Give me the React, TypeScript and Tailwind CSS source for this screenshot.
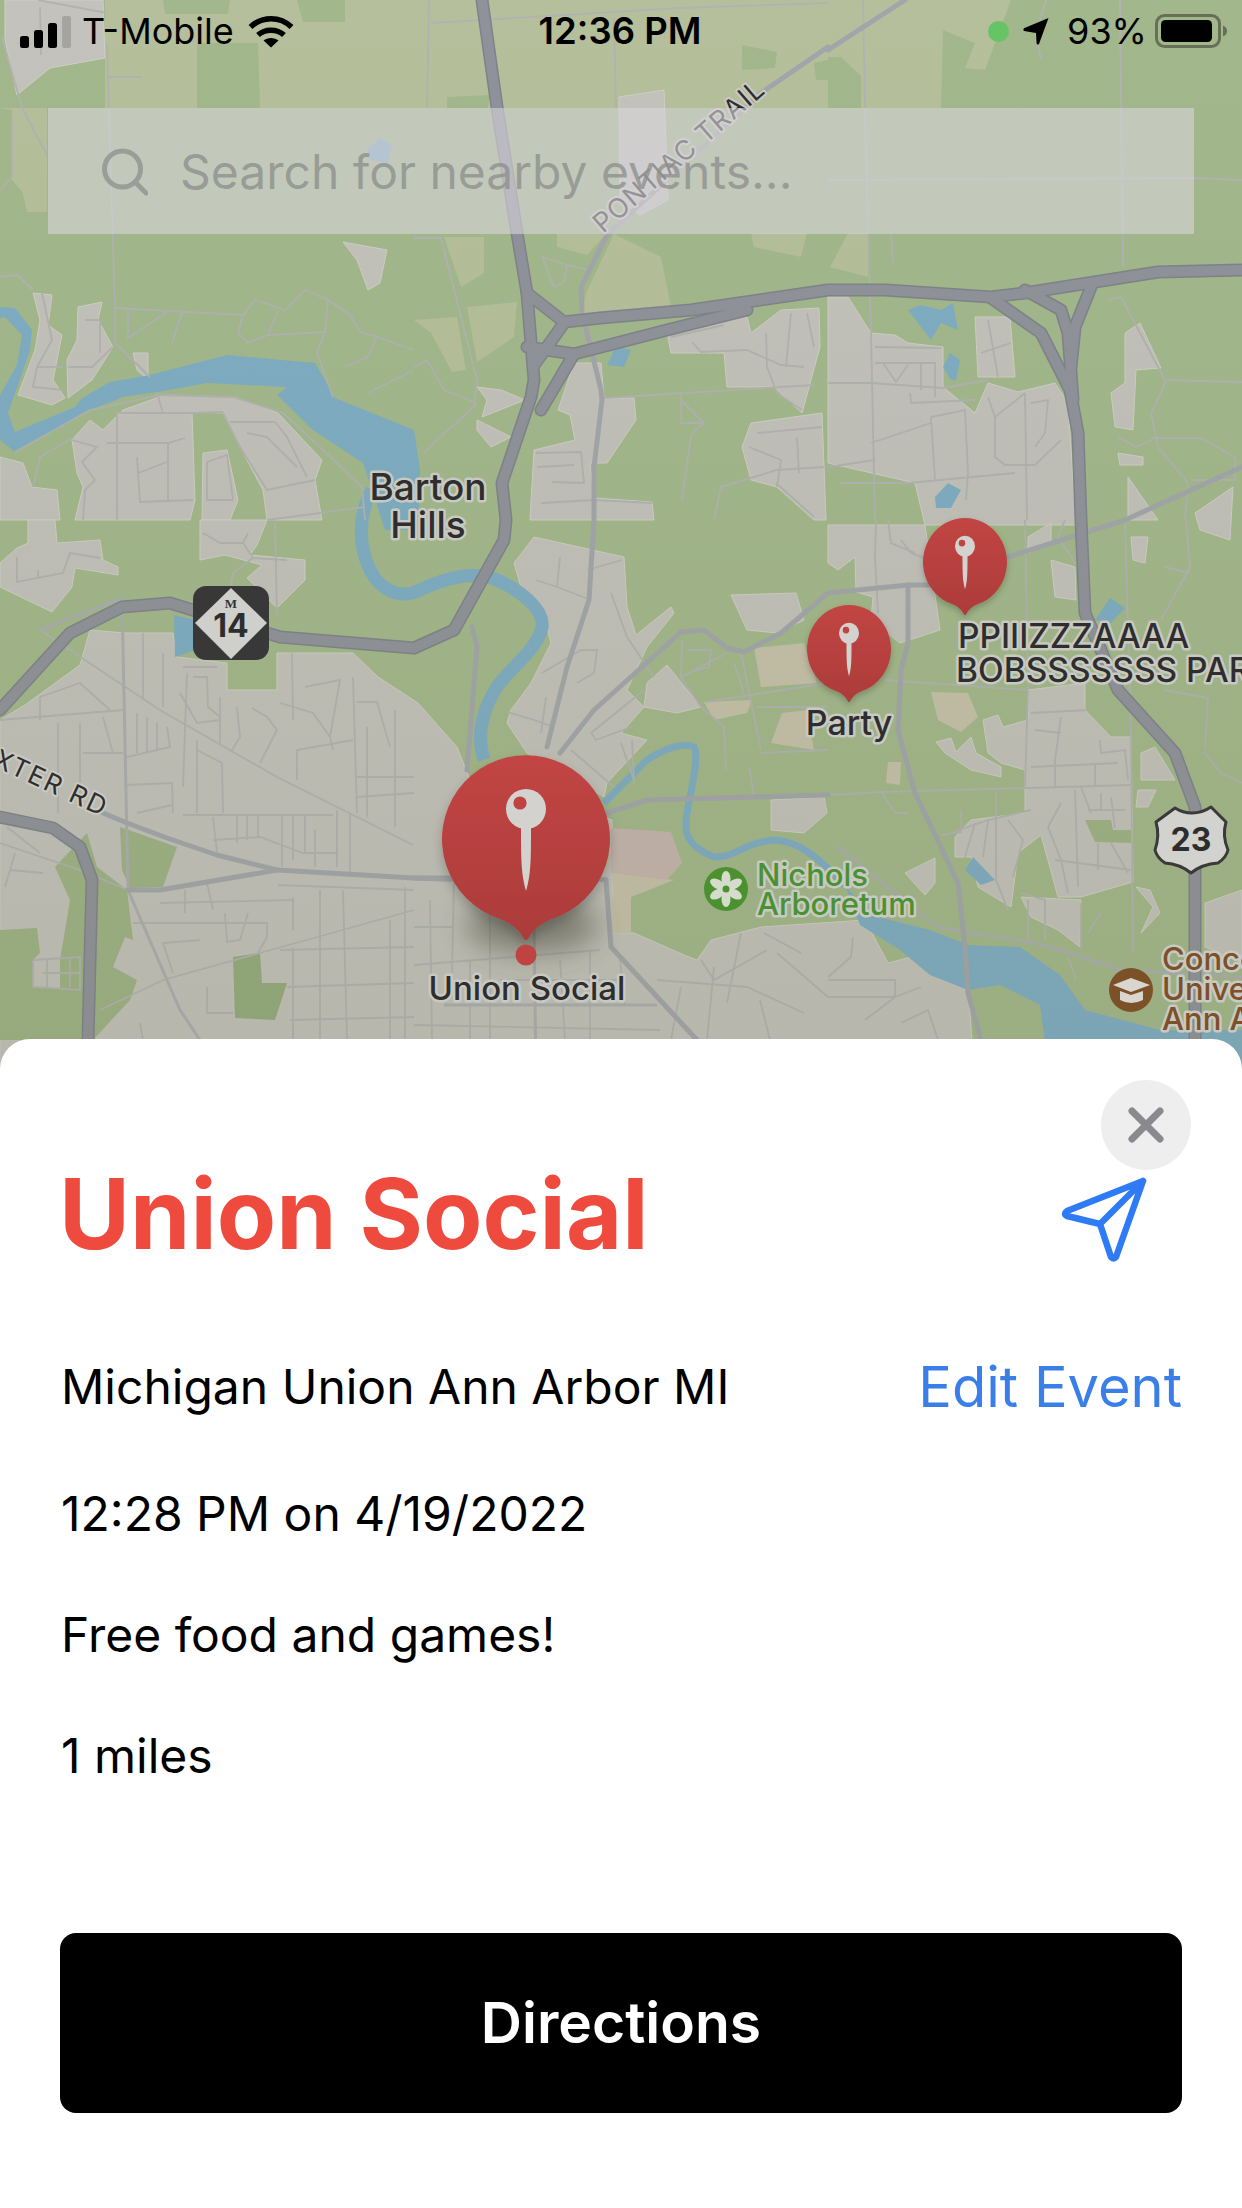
const TAN = [
  "105,0 1011,0 985,70 965,68 975,43 943,30 941,108 105,108",
  "0,108 47,108 47,210 25,195 12,180 12,110",
  "22,190 47,190 47,212 27,212",
  "557,234 606,234 587,255 557,247",
  "444,237 484,237 484,273 461,287",
  "586,293 614,234 661,257 671,307 627,317 582,315",
  "467,307 517,302 514,337 477,362",
  "414,320 457,317 466,370 452,372 431,333",
  "751,233 807,233 801,257 754,247",
  "848,233 868,233 868,277 830,267",
];

const GREEN_TOP = [
  "197,43 258,43 260,108 197,108",
  "163,0 230,0 228,14 165,14",
  "297,0 345,0 345,22 303,22",
  "447,97 490,95 488,108 447,108",
  "742,45 777,52 775,68 742,70",
  "814,63 828,60 828,80 816,80",
  "828,57 841,57 861,76 861,108 828,108",
];

const URBAN = [
  "5,0 103,0 105,58 50,68 17,95 5,40",
  "33,293 52,295 48,325 62,335 53,380 65,398 52,405 18,395 35,350 40,320",
  "78,307 102,302 98,320 113,347 92,380 68,398 67,360 77,340",
  "133,353 148,353 148,380 137,370",
  "343,242 387,250 380,283 368,290 357,260",
  "72,440 90,420 103,430 123,410 165,395 235,397 278,413 322,460 315,480 322,520 267,520 263,490 240,447 223,413 192,412 195,500 190,520 75,520 83,487 77,473",
  "203,453 227,450 238,500 230,520 202,520",
  "0,457 23,463 32,487 57,490 60,520 0,520",
  "619,97 664,90 668,200 640,215 620,200",
  "667,333 727,317 747,317 751,333 781,310 819,308 820,347 802,413 774,387 727,387 724,353 671,353",
  "477,387 487,400 482,417 525,400 501,390",
  "477,420 511,437 491,447 477,430",
  "574,363 601,363 604,398 634,398 636,420 607,463 590,463 594,498 652,502 654,520 530,520 534,450 575,440 570,415 558,410",
  "751,423 822,413 826,520 814,520 777,487 751,480 742,447",
  "828,297 848,297 871,333 895,335 908,343 943,347 943,387 975,413 988,383 1018,392 1055,383 1068,403 1076,525 925,525 915,483 828,463 828,383",
  "1125,333 1140,323 1161,368 1136,370 1133,430 1115,427 1111,393 1125,383",
  "975,317 1010,317 1015,377 978,377",
  "1118,453 1143,457 1143,465 1120,465",
  "1128,477 1158,520 1128,520",
  "1195,513 1233,487 1230,540 1200,530",
  "28,520 55,520 57,543 100,540 103,560 118,567 118,575 75,568 72,587 52,612 0,587 0,563 17,548 28,543",
  "200,520 267,520 257,545 250,555 305,560 305,580 277,608 247,578 262,565 225,555 200,560",
  "0,720 25,705 80,665 90,630 125,633 173,633 177,657 227,663 227,690 277,690 277,653 353,653 378,677 418,703 457,747 470,780 560,800 612,820 614,933 634,933 684,955 697,960 711,940 761,927 865,920 888,963 911,957 968,987 975,1080 0,1080",
  "514,563 534,537 624,557 627,607 636,635 671,607 674,613 647,647 627,690 644,707 621,733 647,740 607,783 604,797 560,770 527,753 507,723 511,710 531,683 551,643 544,617 521,587",
  "647,683 667,665 701,707 677,713 644,707",
  "731,595 796,593 804,620 777,633 747,630",
  "771,800 824,797 827,813 804,833 771,830",
  "828,525 925,525 940,630 900,643 871,620 873,597 856,592 855,557 838,570 828,563",
  "1051,560 1075,567 1076,600 1055,597",
  "1028,537 1051,523 1051,543 1028,553",
  "1131,537 1148,537 1145,563 1133,560",
  "983,720 998,715 1003,727 1028,720 1028,690 1085,683 1085,710 1111,737 1131,737 1133,882 1081,897 1058,897 1041,835 1018,853 1011,907 978,887 971,857 955,857 955,837 971,820 1025,813 1025,770 1001,763 988,753",
  "936,742 951,738 956,752 971,737 976,753 1001,767 1001,777 971,770 945,753",
  "1021,897 1081,900 1080,947 1058,930 1031,917",
  "905,873 935,858 935,883 925,895",
  "1141,753 1155,747 1175,780 1141,780",
  "1138,790 1156,790 1148,807 1136,807",
  "1136,887 1150,890 1160,913 1141,933 1153,907",
  "1205,903 1242,890 1242,963 1205,947",
];

const GREEN_OVER = [
  "120,827 177,847 163,887 130,888 122,870",
  "55,867 87,833 97,867 127,890 133,940 125,937 113,967 137,980 130,1000 93,1040 60,1040 60,960 70,900",
  "0,930 37,928 40,953 33,960 33,987 80,990 80,1040 0,1040",
  "1085,820 1111,820 1113,830 1131,830 1133,843 1095,842",
];

const BEIGE = [
  "754,648 804,643 817,683 761,687",
  "704,702 752,700 747,713 714,720",
  "782,713 807,710 814,750 771,743",
  "931,692 968,693 978,717 961,732 938,720",
  "888,762 901,762 900,785 886,783",
  "614,873 674,880 631,897 631,933 612,933",
];

const WATER = [
  "0,307 15,308 32,330 30,350 18,385 8,413 15,432 75,407 82,398 110,382 150,375 227,355 315,363 335,398 414,430 420,470 418,530 385,530 372,490 363,463 313,430 277,395 287,387 207,383 157,392 123,397 83,413 15,452 0,440 0,395 17,365 22,335 5,317 0,318",
  "607,365 616,347 631,350 624,367",
  "908,310 921,305 941,310 953,303 958,330 941,323 931,340 921,327",
  "943,367 950,353 960,360 956,380 951,380",
  "935,497 948,483 961,490 951,508 936,508",
  "1095,620 1110,598 1125,608 1111,623",
  "965,870 973,857 995,880 981,885",
  "174,615 195,620 195,650 175,657",
  "367,150 380,138 392,145 388,163 370,160",
  "845,885 870,915 930,930 968,945 1020,947 1060,975 1085,1010 1160,1030 1242,1030 1242,1080 1050,1080 1040,1005 1000,985 968,990 930,975 900,950 860,925",
];

const STREETS = [
  "38,0 107,13", "40,7 41,55", "2,37 17,90 23,110 47,155", "12,117 12,177 0,190", "107,43 115,310 115,343 150,377", "107,77 142,77",
  "0,277 17,275 33,290", "113,308 243,315", "128,308 128,338 167,312", "182,312 172,343", "243,315 255,300 285,310 305,290 328,300 350,315 360,332 378,337 414,350",
  "238,333 248,343 268,335 325,332", "243,315 238,333", "278,310 268,335", "328,300 325,332 317,353 333,397", "377,337 368,357 345,367", "414,370 368,393",
  "113,347 92,367 68,367", "100,320 100,353", "85,320 100,320", "42,293 52,340 37,367 33,387 63,390", "37,367 63,367", "15,452 90,410 160,395 233,397 283,413 320,447 362,487 365,520",
  "157,393 163,413 117,413 117,520", "163,413 190,413 223,412", "168,443 168,500", "107,443 168,443 185,438", "137,457 138,473 167,462", "138,473 140,502 193,500",
  "72,440 97,447 82,462 95,480 85,490 83,520", "207,462 227,455 233,500 207,500 207,462", "223,413 240,447 267,490 315,480", "230,422 275,422 287,437 307,477", "247,433 267,437 297,467",
  "33,487 40,457 72,438", "267,520 365,507",
  "429,0 427,107", "431,23 681,8 828,3", "614,17 616,107", "414,238 441,238 477,380 474,407 437,440 424,453", "542,257 554,287 564,282 567,265 542,257", "567,265 587,270", "414,367 427,360 444,390 477,403",
  "604,398 814,385", "681,393 681,423 704,423 691,435 682,500", "681,400 704,423", "671,337 724,325", "692,342 701,352 747,350 781,365 804,367", "766,333 767,367 777,393 802,410", "791,313 786,367", "807,313 814,347",
  "757,433 822,427", "749,447 781,460 777,487", "797,437 799,473", "536,453 581,452 584,483 552,482", "537,467 574,465", "541,503 594,500 652,503", "776,483 814,517", "714,520 721,487 777,470 824,467",
  "863,0 865,107 871,333 875,520", "1120,0 1123,267", "891,233 893,263", "828,180 1195,178 1242,180", "1035,33 1041,60", "1046,0 1036,33", "828,383 871,383 943,388 988,380", "875,347 941,348", "875,363 935,363 935,397", "921,363 921,390",
  "883,363 896,382 908,365", "910,393 911,403 975,400", "931,417 965,410 968,473 966,500", "931,417 935,480", "871,443 931,423", "828,467 875,460", "841,483 908,483 1015,473", "988,397 995,417 1025,393", "995,417 995,457 1005,465 1035,465 1061,440",
  "1025,393 1027,520", "1031,403 1048,400 1045,433 1035,447", "988,320 998,377", "981,353 1011,343", "1108,300 1121,297 1165,380 1242,382", "1166,382 1151,413 1158,447 1188,483 1185,520", "1118,437 1136,447 1155,438 1201,438 1235,457 1235,480 1191,480",
  "40,630 160,710 277,777 413,845", "143,633 143,700", "163,653 163,707", "187,673 183,787", "220,697 220,743", "292,653 293,720", "353,677 357,813", "0,720 123,710", "40,697 80,683 110,710", "40,697 40,720", "58,723 58,813", "80,723 80,803", "103,717 113,753", "83,753 123,753", "127,757 170,747 167,727",
  "137,713 137,753", "147,717 147,753", "157,723 157,750", "127,785 172,783 173,813", "137,813 172,805", "183,815 333,815", "197,750 222,763 223,813", "197,740 197,813", "280,703 313,713 330,737 333,750", "353,740 297,750 297,780", "357,702 377,702 390,747", "357,777 414,777", "357,797 414,793", "367,727 367,817", "395,710 395,827",
  "213,840 260,837 303,853 337,853", "213,817 217,853", "237,815 237,843", "247,815 247,840", "258,815 258,837", "282,815 282,867", "293,815 293,860", "305,815 305,853", "315,830 315,867", "337,810 337,867", "350,813 350,873", "278,885 414,890", "160,903 293,900", "185,890 185,913", "207,883 213,910", "225,913 227,942 240,940 248,913", "133,923 267,923 267,937 258,953",
  "293,897 293,930", "320,890 320,1040", "343,890 347,1040", "390,920 390,1040", "405,887 405,1040", "293,947 293,1040", "414,910 260,953 163,980 100,1010", "287,987 414,983", "290,1020 414,1017", "280,950 414,947", "207,987 207,1013 233,1013", "173,973 163,943 200,940",
  "0,843 80,870 128,890", "7,827 40,853", "15,853 5,887", "10,870 43,873", "33,960 80,957 80,990 33,987 33,960", "47,960 47,987", "70,957 70,987", "43,973 80,973", "140,1023 143,1040", "293,1023 293,1040", "17,557 17,582 63,573 70,553 100,558", "38,570 38,578",
  "220,543 243,543 253,558 287,560", "253,558 233,573 230,590", "243,543 248,533", "203,533 220,543", "275,520 277,617", "183,667 217,667", "180,693 197,723 220,720", "193,677 207,677 208,707 220,717", "237,707 240,737 232,750", "252,708 267,717 277,730 260,763", "305,687 340,680 330,737",
  "536,580 557,587 591,600", "560,557 557,587", "587,570 622,560", "611,593 627,637 654,677", "542,673 581,650 597,650 594,673 577,683", "507,712 534,720 554,727", "546,697 541,733", "591,733 644,690", "591,733 596,740 631,727", "571,750 614,787", "621,743 634,780", "632,740 634,783",
  "682,640 681,677 701,707 724,727 726,770", "687,650 711,650 709,667 691,672", "681,677 727,653", "706,702 828,683", "734,663 744,693", "741,653 761,750", "761,753 828,750", "749,767 754,797", "757,707 828,707",
  "454,878 452,973", "414,927 452,927", "490,903 490,1040", "430,900 432,1040", "470,960 470,1040", "414,965 600,950", "500,980 620,980", "414,1025 660,1030", "560,960 565,1040", "590,950 590,1040", "620,960 625,1005", "701,960 714,980 767,950", "714,967 707,1040", "741,933 727,1003", "777,953 828,997", "657,980 747,987 804,1013", "681,987 671,1040", "764,933 801,953", "760,1000 770,1040",
  "876,520 875,557 878,613", "901,540 911,553 938,563", "888,520 891,543 915,553", "1025,520 1028,687 1025,787", "1065,520 1058,537 1075,563", "1125,520 1131,737 1133,953", "1186,520 1190,567 1161,620", "1165,567 1190,573", "1205,753 1221,773 1242,783", "1165,690 1208,698 1205,750", "885,680 1028,690",
  "1031,713 1088,710", "1035,730 1061,733", "1061,717 1055,760", "1031,767 1118,763", "1055,760 1055,787", "1095,763 1095,787", "1100,740 1101,753 1125,750 1128,780", "1028,788 1131,785", "828,795 881,792 1028,788", "1081,787 1091,813", "1061,803 1048,827 1061,860 1068,893", "1075,790 1078,887", "1101,793 1101,810", "1111,797 1115,828", "1088,810 1125,810",
  "1055,860 1131,870", "1098,843 1098,870", "1111,843 1128,873", "1031,810 988,820 945,835", "975,823 965,857", "988,820 983,857", "996,793 996,880 1008,910", "1008,820 1023,840 1013,877", "881,792 895,813 908,813", "961,810 961,832 941,835", "1021,893 1045,900 1045,940", "1028,900 1028,940", "1081,903 1081,950", "1088,933 1101,913", "1068,957 1076,980",
  "853,937 851,957 828,977", "828,980 895,980 895,997 828,997", "865,1020 895,997 921,987", "901,1023 928,1010 938,1040",
];

const ROADS_MID = [
  "103,813 127,823 167,838 217,855 277,870 414,878 470,880",
  "128,890 160,890 277,870",
  "828,47 761,93 607,235 581,287 582,313 601,390 602,400 594,467 594,520 589,600 567,667 547,747",
  "828,50 905,0",
  "560,753 594,710 681,632 704,630 727,648 744,652 781,633 828,593 908,585 935,585",
  "1008,557 1125,520 1242,467",
  "908,585 908,643 901,670 898,730 915,793 958,883 965,947 968,993 981,1040",
  "472,627 477,647 467,770",
  "607,813 647,800 828,795",
  "606,880 611,947 697,1040",
  "414,878 454,878",
  "606,880 590,878",
];

const ROADS_THIN = [
  "122,600 128,890 180,1010 200,1040",
  "40,630 122,598",
  "444,1005 657,1005",
  "534,920 536,1080",
  "838,847 938,927 1045,945 1121,970 1242,977",
  "1208,960 1242,965",
];

const HIGHWAYS = [
  "482,0 497,107 517,233 527,293 534,380 531,397 502,483 506,520 504,540 454,630 414,648 280,637 170,603 122,607 70,633 0,710",
  "527,293 564,322 600,318 691,310 828,290 885,290 991,297 1025,293 1158,272 1242,270",
  "564,323 547,347 534,365",
  "527,347 574,354 667,330 747,310",
  "574,354 541,410",
  "991,298 1041,333 1070,390 1078,433 1081,520 1085,613 1118,690 1175,753 1195,807 1195,1080",
  "1025,290 1061,310 1068,333 1073,400",
  "1091,287 1075,327 1071,367",
  "0,817 53,828 80,847 92,880 87,1080",
];

function MapLabel({ x, y, size = 31, fill = "#2e2e2e", anchor = "start", children }: { x: number; y: number; size?: number; fill?: string; anchor?: "start" | "middle" | "end"; children: string }) {
  return (
    <text x={x} y={y} fontSize={size} fill={fill} textAnchor={anchor} stroke="#c9c9c3" strokeWidth="5" strokeLinejoin="round" className="font-medium [paint-order:stroke]">
      {children}
    </text>
  );
}

function Pin({ x, y, sx = 1, sy = 1 }: { x: number; y: number; sx?: number; sy?: number }) {
  return (
    <g transform={`translate(${x} ${y}) scale(${sx} ${sy})`}>
      <path d="M-26 80 A84 84 0 1 1 26 80 C14 84 6 92 2 100 Q0 102 -2 100 C-6 92 -14 84 -26 80 Z" fill="url(#pinFill)" filter="url(#pinShadow)" />
      <circle cx="0" cy="-30" r="20" fill="#d3d2cf" />
      <circle cx="-6" cy="-36" r="6.6" fill="#bf4341" />
      <path d="M-5 -14 L5 -14 C5 20 5 35 0 52 C-5 35 -5 20 -5 -14 Z" fill="#d3d2cf" />
    </g>
  );
}

function MapCanvas() {
  return (
    <svg viewBox="0 0 1242 1080" className="absolute inset-x-0 top-0 h-[1080px] w-[1242px]">
      <defs>
        <linearGradient id="pinFill" x1="0" y1="0" x2="0" y2="1">
          <stop offset="0" stopColor="#c24544" />
          <stop offset="1" stopColor="#ab3c39" />
        </linearGradient>
        <linearGradient id="dim" x1="0" y1="0" x2="0" y2="1">
          <stop offset="0" stopColor="#6b6b3f" stopOpacity="0" />
          <stop offset="1" stopColor="#6b6b3f" stopOpacity="0.13" />
        </linearGradient>
        <filter id="pinShadow" x="-30%" y="-30%" width="160%" height="170%">
          <feDropShadow dx="0" dy="6" stdDeviation="6" floodColor="#000" floodOpacity="0.22" />
        </filter>
        <filter id="soft" x="-50%" y="-100%" width="200%" height="300%">
          <feGaussianBlur stdDeviation="14" />
        </filter>
      </defs>

      <rect width="1242" height="1080" fill="#a2b88c" />
      {TAN.map((p) => <polygon key={p} points={p} fill="#b6bf9b" />)}
      {GREEN_TOP.map((p) => <polygon key={p} points={p} fill="#a2b88c" />)}
      {URBAN.map((p) => <polygon key={p} points={p} fill="#c3c2bc" stroke="#ced0c6" strokeWidth="1" />)}
      {GREEN_OVER.map((p) => <polygon key={p} points={p} fill="#9db387" />)}
      <polygon points="233,957 260,953 262,983 287,983 275,1020 235,1018" fill="#94ac7e" />
      {BEIGE.map((p) => <polygon key={p} points={p} fill="#c6c1ab" />)}
      <polygon points="611,828 671,832 682,863 667,880 611,873" fill="#c5b5af" />
      {WATER.map((p) => <polygon key={p} points={p} fill="#7eadc5" />)}

      {/* thin river arms */}
      <path d="M372 490 C358 515 358 545 370 570 C380 590 400 600 420 590 C445 578 475 570 497 580 C520 590 545 610 542 627 C538 650 505 672 495 690 C482 712 476 735 484 760" fill="none" stroke="#7eadc5" strokeWidth="13" />
      <path d="M604 803 L647 760 C665 748 685 742 694 747 C700 755 690 795 687 813 C684 830 684 845 714 857 C735 858 745 842 775 840 C800 842 815 855 845 885" fill="none" stroke="#7eadc5" strokeWidth="7" />

      <g fill="none" stroke="#b1b3b2" strokeWidth="1.8">
        {STREETS.map((p, i) => <polyline key={i} points={p} />)}
        {ROADS_THIN.map((p) => <polyline key={p} points={p} strokeWidth="3" stroke="#abaeb0" />)}
      </g>
      <g fill="none" strokeLinejoin="round" strokeLinecap="round">
        {ROADS_MID.map((p) => <polyline key={p} points={p} stroke="#a2a6ab" strokeWidth="5" />)}
        {HIGHWAYS.map((p) => <polyline key={p} points={p} stroke="#7f828b" strokeWidth="13" />)}
        {HIGHWAYS.map((p) => <polyline key={p} points={p} stroke="#8f929b" strokeWidth="10" />)}
      </g>
      <rect width="1242" height="1080" fill="url(#dim)" />

      {/* road names */}
      <g transform="translate(603 234) rotate(-41)">
        <text x={0} y={0} fontSize={27} fill="#2e2e2e" stroke="#c9c9c3" strokeWidth="4" strokeLinejoin="round" className="tracking-[1px] [paint-order:stroke]">PONTIAC TRAIL</text>
      </g>
      <g transform="translate(103 817) rotate(25)">
        <text x={0} y={0} fontSize={26} fill="#2e2e2e" textAnchor="end" stroke="#c9c9c3" strokeWidth="4" strokeLinejoin="round" className="tracking-[2px] [paint-order:stroke]">DEXTER RD</text>
      </g>

      {/* M-14 shield */}
      <rect x="193" y="586" width="76" height="74" rx="13" fill="#383838" />
      <polygon points="231,588 267,623 231,659 195,623" fill="#cfcfcb" />
      <text x="231" y="608" fontSize="13" fontWeight="700" fill="#333" textAnchor="middle" fontFamily="Liberation Serif, serif">M</text>
      <text x="231" y="637" fontSize="32" fontWeight="700" fill="#2d2d2d" textAnchor="middle">14</text>

      {/* US-23 shield */}
      <path d="M1175 808 Q1183 813 1192 813 Q1202 813 1211 807 L1226 822 Q1222 836 1228 850 Q1226 858 1218 863 Q1202 864 1191 873 Q1180 864 1165 863 Q1157 858 1155 850 Q1160 836 1156 822 Z" fill="#d2d2ce" stroke="#3a3a3a" strokeWidth="3" strokeLinejoin="round" />
      <text x="1191" y="851" fontSize="32" fontWeight="700" fill="#2d2d2d" textAnchor="middle">23</text>

      {/* place labels */}
      <MapLabel x={428} y={500} size={37} anchor="middle">Barton</MapLabel>
      <MapLabel x={428} y={538} size={37} anchor="middle">Hills</MapLabel>
      <MapLabel x={757} y={886} fill="#4a9132">Nichols</MapLabel>
      <MapLabel x={757} y={915} fill="#4a9132">Arboretum</MapLabel>
      <MapLabel x={1162} y={970} fill="#7c5029">Concordia</MapLabel>
      <MapLabel x={1162} y={1000} fill="#7c5029">University</MapLabel>
      <MapLabel x={1162} y={1030} fill="#7c5029">Ann Arbor</MapLabel>

      {/* park icon */}
      <circle cx="726" cy="889" r="22" fill="#4c9130" />
      <g fill="#d6dccb">
        {[0, 60, 120, 180, 240, 300].map((deg) => (
          <ellipse key={deg} cx="726" cy="879" rx="4.5" ry="8" transform={`rotate(${deg} 726 889)`} />
        ))}
      </g>
      <circle cx="726" cy="889" r="3.5" fill="#4c9130" />

      {/* college icon */}
      <circle cx="1131" cy="990" r="22" fill="#7d5128" />
      <polygon points="1113,985 1131,978 1150,985 1131,992" fill="#d9d6d0" />
      <path d="M1120 991 L1131 995 L1143 991 L1143 1000 Q1131 1006 1120 1000 Z" fill="#d9d6d0" />

      {/* pins */}
      <ellipse cx="532" cy="925" rx="66" ry="28" fill="#3b3b2c" opacity="0.45" filter="url(#soft)" />
      <Pin x={526} y={839} />
      <circle cx="526" cy="955" r="10.5" fill="#bf4341" />
      <MapLabel x={527} y={1000} size={33} anchor="middle">Union Social</MapLabel>
      <Pin x={849} y={649} sx={0.5} sy={0.525} />
      <MapLabel x={849} y={735} size={34} anchor="middle">Party</MapLabel>
      <Pin x={965} y={562} sx={0.5} sy={0.525} />
      <MapLabel x={958} y={648} size={33.5}>PPIIIZZZAAAA</MapLabel>
      <MapLabel x={956} y={682} size={33.5}>BOBSSSSSSS PARTY</MapLabel>
    </svg>
  );
}

function SignalIcon() {
  return (
    <svg width="52" height="33" viewBox="0 0 52 33">
      <rect x="0" y="21" width="9" height="12" rx="2.5" fill="#000" />
      <rect x="14" y="15" width="9" height="18" rx="2.5" fill="#000" />
      <rect x="28" y="8" width="9" height="25" rx="2.5" fill="#000" />
      <rect x="42" y="1" width="9" height="32" rx="2.5" fill="#a5a59f" />
    </svg>
  );
}

function WifiIcon() {
  return (
    <svg width="46" height="34" viewBox="0 0 46 34" fill="none" stroke="#000" strokeWidth="5.5">
      <path d="M2.5 13 C14 2 32 2 43.5 13" />
      <path d="M10 21 C17 14.5 29 14.5 36 21" />
      <path d="M23 33.5 L15.5 26.5 C19.5 23 26.5 23 30.5 26.5 Z" fill="#000" stroke="none" />
    </svg>
  );
}

function BatteryIcon() {
  return (
    <svg width="73" height="34" viewBox="0 0 73 34">
      <rect x="1.5" y="1.5" width="63" height="31" rx="8" fill="none" stroke="#677057" strokeWidth="3" />
      <rect x="6" y="6" width="51" height="22" rx="4.5" fill="#000" />
      <path d="M68 11.5 Q72 13 72 17 Q72 21 68 22.5 Z" fill="#677057" />
    </svg>
  );
}

export default function App() {
  return (
    <div className="relative flex h-[2208px] w-[1242px] flex-col overflow-hidden bg-white font-['Inter',sans-serif]">
      <MapCanvas />

      {/* Status bar */}
      <div className="relative flex h-[60px] items-center justify-between pl-[20px] pr-[14px] pt-[2px] text-[36px] leading-[58px] text-black">
        <div className="flex w-[296px] items-center">
          <SignalIcon />
          <span className="ml-[10px]">T-Mobile</span>
          <span className="ml-[14px]"><WifiIcon /></span>
        </div>
        <span className="text-[36.5px] font-semibold">12:36 PM</span>
        <div className="flex w-[304px] items-center justify-end">
          <span className="h-[21px] w-[21px] rounded-full bg-[#66c465]" />
          <svg width="26" height="27" viewBox="0 0 26 27" className="ml-[14px]">
            <path d="M25.5 0 L16 26 Q14 27.5 13.5 25 L13 15 L1 13 Q-0.5 11 1.5 10 Z" fill="#000" />
          </svg>
          <span className="ml-[18px]">93%</span>
          <span className="ml-[8px]"><BatteryIcon /></span>
        </div>
      </div>

      {/* Search */}
      <div className="relative mx-[48px] mt-[48px] flex h-[126px] items-center bg-[#d9d6da]/60 pl-[54px] pt-[2px] text-[48px] text-[#8c8e8ac0]">
        <svg width="46" height="50" viewBox="0 0 46 50" fill="none" stroke="#9b9d99" strokeWidth="5" strokeLinecap="round">
          <circle cx="20.5" cy="22" r="18" />
          <path d="M33 35 L44 46" />
        </svg>
        <span className="ml-[32px]">Search for nearby events...</span>
      </div>

      {/* Event sheet */}
      <div className="relative mt-auto flex h-[1169px] flex-col rounded-t-[30px] bg-white">
        <button className="mr-[51px] mt-[41px] flex h-[90px] w-[90px] items-center justify-center self-end rounded-full bg-[#eeeeee]">
          <svg width="36" height="36" viewBox="0 0 36 36" stroke="#8a8a8e" strokeWidth="7" strokeLinecap="round">
            <path d="M4 4 L32 32 M32 4 L4 32" />
          </svg>
        </button>

        <div className="-mt-[4px] flex items-start justify-between pl-[59px] pr-[95px]">
          <h1 className="text-[97px] font-bold leading-[96px] text-[#ee4b3e]">Union Social</h1>
          <svg width="86" height="86" viewBox="0 0 86 86" fill="none" stroke="#2f7bf6" strokeWidth="6.5" strokeLinejoin="round" strokeLinecap="round" className="mt-[11px]">
            <path d="M82 4 L6 34 Q2 37 6 39 L39 47 L50 80 Q52.5 83 55 80 Z M82 4 L39 47" />
          </svg>
        </div>

        <div className="mt-[94px] flex items-center justify-between pl-[61px] pr-[60px] text-[48px] leading-[60px] text-black">
          <span>Michigan Union Ann Arbor MI</span>
          <span className="text-[56px] text-[#3a7fe8]">Edit Event</span>
        </div>
        <p className="mt-[67px] pl-[61px] text-[48px] leading-[60px] text-black">12:28 PM on 4/19/2022</p>
        <p className="mt-[61px] pl-[61px] text-[48px] leading-[60px] text-black">Free food and games!</p>
        <p className="mt-[61px] pl-[61px] text-[48px] leading-[60px] text-black">1 miles</p>

        <button className="mx-[60px] mb-[95px] mt-auto flex h-[180px] items-center justify-center rounded-[16px] bg-black text-[57px] font-semibold text-white">
          Directions
        </button>
      </div>
    </div>
  );
}
